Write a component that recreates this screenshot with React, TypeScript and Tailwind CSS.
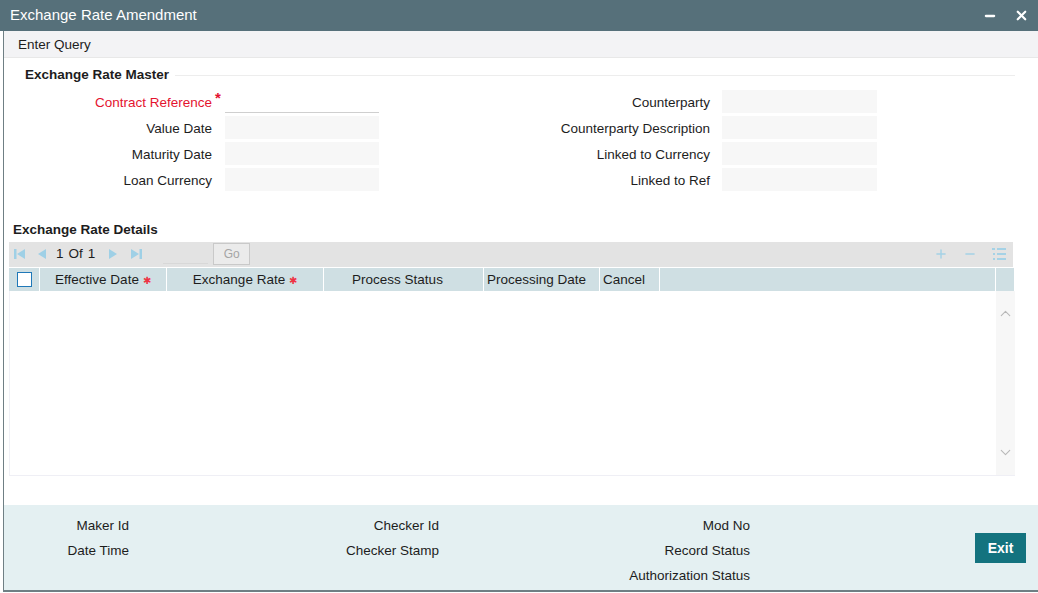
import { ChevronDown, ChevronUp, Minus, Plus, X } from "lucide-react";

const font = { fontFamily: '"Liberation Sans", Arial, sans-serif' };

type FieldProps = { label: string; required?: boolean; first?: boolean };

function LeftField({ label, required, first }: FieldProps) {
  return (
    <div className="flex h-[26px] items-start">
      <div
        className={`w-[208px] pt-[5px] text-right text-[13.5px] leading-[15px] ${
          required ? "text-[#e4132f]" : "text-[#1d1d1d]"
        }`}
      >
        {label}
      </div>
      <div className="w-[13px] pl-[3px] text-[15px] font-bold leading-[15px] text-[#e4132f]">
        {required ? "*" : ""}
      </div>
      {first ? (
        <div className="h-[23px] w-[154px] border-b border-[#cfcfcf] bg-white" />
      ) : (
        <div className="h-[23px] w-[154px] bg-[#f7f7f7]" />
      )}
    </div>
  );
}

function RightField({ label }: FieldProps) {
  return (
    <div className="flex h-[26px] items-start">
      <div className="w-[331px] pt-[5px] text-right text-[13.5px] leading-[15px] text-[#1d1d1d]">
        {label}
      </div>
      <div className="ml-[12px] h-[23px] w-[155px] bg-[#f7f7f7]" />
    </div>
  );
}

function Star() {
  return <span className="ml-[4px] text-[10px] text-[#ee3344]">✱</span>;
}

export default function App() {
  return (
    <div className="h-[593px] w-[1038px] overflow-hidden bg-white" style={font}>
      {/* title bar */}
      <div className="flex h-[31px] items-center justify-between bg-[#56707a] pl-[10px] pr-[9px]">
        <span className="text-[15px] text-white">Exchange Rate Amendment</span>
        <div className="flex items-center gap-[17px] text-white">
          <Minus size={14} strokeWidth={4} />
          <X size={15} strokeWidth={3.5} />
        </div>
      </div>

      <div className="ml-[3px] flex h-[561px] flex-col border-b-2 border-l border-[#6f7f84]">
        {/* toolbar */}
        <div className="flex h-[27px] items-center border-b border-[#e8e8e8] bg-[#f3f3f5] pl-[14px] pt-[2px] text-[13.5px] text-[#1d1d1d]">
          Enter Query
        </div>

        {/* master */}
        <div className="mt-[7px] flex items-center pl-[21px]">
          <span className="text-[13.5px] font-bold text-[#1d1d1d]">Exchange Rate Master</span>
          <div className="ml-[6px] mr-[23px] h-px flex-1 bg-[#ededed]" />
        </div>

        <div className="mt-[5px] flex">
          <div className="flex flex-col">
            <LeftField label="Contract Reference" required first />
            <LeftField label="Value Date" />
            <LeftField label="Maturity Date" />
            <LeftField label="Loan Currency" />
          </div>
          <div className="flex flex-col">
            <RightField label="Counterparty" />
            <RightField label="Counterparty Description" />
            <RightField label="Linked to Currency" />
            <RightField label="Linked to Ref" />
          </div>
        </div>

        {/* details */}
        <div className="mt-[26px] pl-[9px] text-[13.5px] font-bold text-[#1d1d1d]">
          Exchange Rate Details
        </div>

        <div className="ml-[5px] mt-[1px] w-[1006px]">
          <div className="flex h-[25px] w-[1004px] items-center bg-[#e3e3e3] text-[13.5px]">
            <div className="flex items-center pl-[5px] text-[#9fd0e6]">
              <svg width="12" height="12" viewBox="0 0 12 12">
                <rect x="0" y="1" width="2.5" height="10" fill="currentColor" />
                <polygon points="11,1 11,11 3,6" fill="currentColor" />
              </svg>
              <svg className="ml-[11px]" width="10" height="12" viewBox="0 0 10 12">
                <polygon points="9,1 9,11 1,6" fill="currentColor" />
              </svg>
              <span className="ml-[9px] text-[#1d1d1d]">1</span>
              <span className="ml-[5px] text-[#1d1d1d]">Of</span>
              <span className="ml-[5px] text-[#1d1d1d]">1</span>
              <svg className="ml-[13px]" width="10" height="12" viewBox="0 0 10 12">
                <polygon points="1,1 1,11 9,6" fill="currentColor" />
              </svg>
              <svg className="ml-[12px]" width="12" height="12" viewBox="0 0 12 12">
                <polygon points="1,1 1,11 9,6" fill="currentColor" />
                <rect x="9.5" y="1" width="2.5" height="10" fill="currentColor" />
              </svg>
              <div className="ml-[21px] h-[20px] w-[45px] border-b border-[#d8d8d8]" />
              <div className="ml-[5px] flex h-[22px] w-[37px] items-center justify-center border border-[#c9c9c9] bg-[#ebebeb] text-[12px] text-[#a5a5a5]">
                Go
              </div>
            </div>
            <div className="ml-auto flex items-center gap-[15px] pr-[7px] text-[#a5d2e6]">
              <Plus size={14} strokeWidth={2.5} />
              <Minus size={14} strokeWidth={2.5} />
              <svg width="14" height="14" viewBox="0 0 14 14" fill="currentColor">
                <rect x="0" y="1" width="3" height="2" />
                <rect x="5" y="1" width="9" height="2" />
                <rect x="1" y="6" width="2" height="2" />
                <rect x="5" y="6" width="9" height="2" />
                <rect x="1" y="11" width="2" height="2" />
                <rect x="5" y="11" width="9" height="2" />
              </svg>
            </div>
          </div>

          {/* header */}
          <div className="mt-px flex h-[23px] text-[13.5px] text-[#1d1d1d]">
            <div className="flex w-[30px] items-center justify-center bg-[#cfdfe3]">
              <div className="h-[15px] w-[15px] border-[1.5px] border-[#1f78b8] bg-white" />
            </div>
            <div className="ml-px flex w-[126px] items-center justify-center bg-[#cfdfe3] pt-[2px]">
              Effective Date
              <Star />
            </div>
            <div className="ml-px flex w-[156px] items-center justify-center bg-[#cfdfe3] pt-[2px]">
              Exchange Rate
              <Star />
            </div>
            <div className="ml-px flex w-[159px] items-center justify-center bg-[#cfdfe3] pr-[12px] pt-[2px]">
              Process Status
            </div>
            <div className="ml-px flex w-[115px] items-center bg-[#cfdfe3] pl-[3px] pt-[2px]">
              Processing Date
            </div>
            <div className="ml-px flex w-[59px] items-center bg-[#cfdfe3] pl-[3px] pt-[2px]">
              Cancel
            </div>
            <div className="ml-px w-[335px] bg-[#cfdfe3]" />
            <div className="ml-px w-[18px] bg-[#cfdfe3]" />
          </div>

          {/* body */}
          <div className="flex h-[185px] border-b border-l border-[#efeff5]">
            <div className="flex-1" />
            <div className="flex w-[19px] flex-col items-center justify-between bg-[#f7f7f7] pb-[14px] pt-[14px] text-[#b8b8b8]">
              <ChevronUp size={17} strokeWidth={1.5} />
              <ChevronDown size={17} strokeWidth={1.5} />
            </div>
          </div>
        </div>

        {/* footer */}
        <div className="mt-auto flex h-[85px] bg-[#e4f0f2] text-[13.5px] leading-[15px] text-[#1d1d1d]">
          <div className="flex w-[125px] flex-col items-end gap-[10px] pt-[13px]">
            <span>Maker Id</span>
            <span>Date Time</span>
          </div>
          <div className="flex w-[310px] flex-col items-end gap-[10px] pt-[13px]">
            <span>Checker Id</span>
            <span>Checker Stamp</span>
          </div>
          <div className="flex w-[311px] flex-col items-end gap-[10px] pt-[13px]">
            <span>Mod No</span>
            <span>Record Status</span>
            <span>Authorization Status</span>
          </div>
          <div className="ml-auto mr-[12px] mt-[28px]">
            <div className="flex h-[30px] w-[51px] items-center justify-center bg-[#13737f] text-[14px] font-bold text-white">
              Exit
            </div>
          </div>
        </div>
      </div>
    </div>
  );
}
